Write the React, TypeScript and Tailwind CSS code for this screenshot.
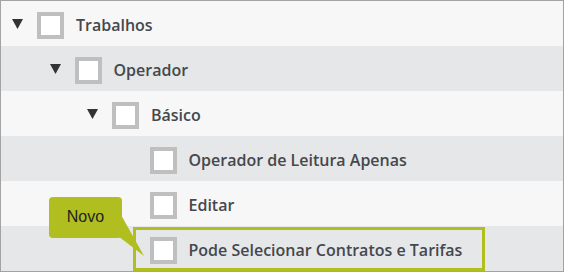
import React from 'react';

type Node = { label: string; level: number; expandable: boolean };

const NODES: Node[] = [
    { label: 'Trabalhos', level: 0, expandable: true },
    { label: 'Operador', level: 1, expandable: true },
    { label: 'Básico', level: 2, expandable: true },
    { label: 'Operador de Leitura Apenas', level: 3, expandable: false },
    { label: 'Editar', level: 3, expandable: false },
    { label: 'Pode Selecionar Contratos e Tarifas', level: 3, expandable: false },
];

const Triangle = () => (
    <svg width="11" height="10" viewBox="0 0 11 10" className="block -mt-[3px]">
        <polygon points="0,0 11,0 5.5,10" fill="#333333" />
    </svg>
);

const App: React.FC = () => {
    return (
        <div className="w-[564px] h-[272px] border border-[#a3a3a3] relative font-['Open_Sans',sans-serif]">
            {NODES.map((node, i) => (
                <div
                    key={node.label}
                    className={`h-[45px] pt-[3px] flex items-center ${i % 2 === 0 ? 'bg-[#f7f7f7]' : 'bg-[#e6e7e9]'}`}
                    style={{ paddingLeft: 11 + node.level * 37.5 }}
                >
                    <div className="w-[25px] flex items-center">
                        {node.expandable && <Triangle />}
                    </div>
                    <div className="w-[27px] h-[27px] border-4 border-[#bfbfbf] bg-white mt-[1px]"></div>
                    <span className="ml-[12px] text-[16px] font-semibold text-[#45484c]">{node.label}</span>
                </div>
            ))}

            {/* destaque do item novo */}
            <div className="absolute left-[132px] top-[226px] w-[352px] h-[44px] border-[3px] border-[#b1be1f] pointer-events-none"></div>

            {/* balão "Novo" */}
            <svg className="absolute left-[110px] top-[210px]" width="36" height="46" viewBox="0 0 36 46">
                <polygon points="9,2 7,25 33,45" fill="#b1be1f" />
            </svg>
            <div className="absolute left-[48px] top-[196px] w-[73px] h-[41px] rounded-[4px] bg-[#b1be1f] flex items-center justify-center">
                <span className="font-['Liberation_Sans',sans-serif] text-[16px] text-[#222] -mt-[1px]">Novo</span>
            </div>
        </div>
    );
};

export default App;
